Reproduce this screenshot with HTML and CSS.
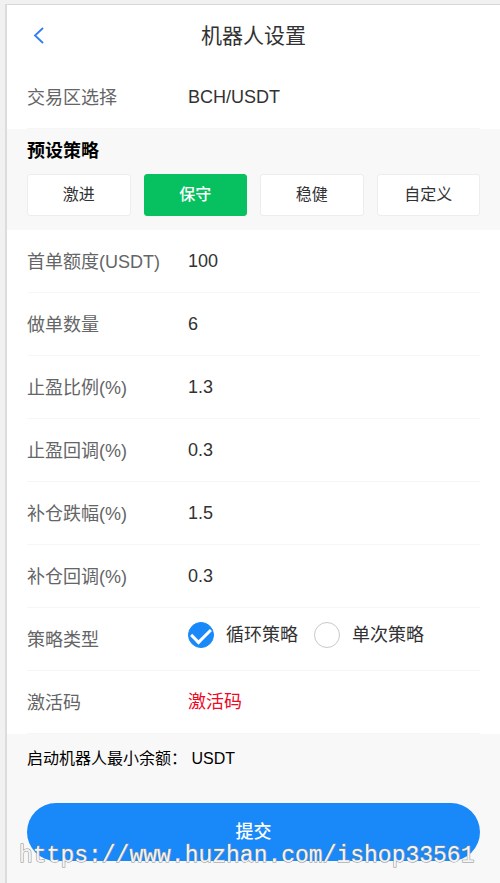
FILE: index.html
```
<!DOCTYPE html>
<html lang="zh-CN">
	<head>
		<meta charset="utf-8" />
		<meta name="viewport" content="width=device-width, initial-scale=1">
		<title>机器人设置</title>
		<link rel="stylesheet" href="styles.css">
	</head>
	<body>
		<form class="page">
			<header class="nav-bar">
				<button type="button" class="nav-back" aria-label="返回">
					<svg width="12" height="18" viewBox="0 0 12 18"><path d="M10 1L2 8.5l8 7.5" fill="none" stroke="#2f7df6" stroke-width="1.8"/></svg>
				</button>
				<h1>机器人设置</h1>
			</header>
			<div class="cell-group">
				<div class="cell">
					<label for="pair">交易区选择</label>
					<input type="text" id="pair" value="BCH/USDT">
				</div>
			</div>
			<section class="preset">
				<h2>预设策略</h2>
				<div class="preset-list">
					<button type="button">激进</button>
					<button type="button" class="active">保守</button>
					<button type="button">稳健</button>
					<button type="button">自定义</button>
				</div>
			</section>
			<div class="cell-group">
				<div class="cell">
					<label for="first">首单额度(USDT)</label>
					<input type="text" id="first" value="100">
				</div>
				<div class="cell">
					<label for="count">做单数量</label>
					<input type="text" id="count" value="6">
				</div>
				<div class="cell">
					<label for="profit">止盈比例(%)</label>
					<input type="text" id="profit" value="1.3">
				</div>
				<div class="cell">
					<label for="profit-back">止盈回调(%)</label>
					<input type="text" id="profit-back" value="0.3">
				</div>
				<div class="cell">
					<label for="cover">补仓跌幅(%)</label>
					<input type="text" id="cover" value="1.5">
				</div>
				<div class="cell">
					<label for="cover-back">补仓回调(%)</label>
					<input type="text" id="cover-back" value="0.3">
				</div>
				<div class="cell">
					<span class="cell-title" id="type-title">策略类型</span>
					<div class="radio-group" role="radiogroup" aria-labelledby="type-title">
						<label class="radio"><input type="radio" name="type" checked>循环策略</label>
						<label class="radio"><input type="radio" name="type">单次策略</label>
					</div>
				</div>
				<div class="cell">
					<label for="code">激活码</label>
					<input type="text" id="code" placeholder="激活码">
				</div>
			</div>
			<footer class="bottom">
				<p>启动机器人最小余额： USDT</p>
				<button type="submit" class="submit">提交</button>
				<div class="watermark">https://www.huzhan.com/ishop33561</div>
			</footer>
		</form>
	</body>
</html>
```
FILE: styles.css
```
* {
	box-sizing: border-box;
}
body {
	margin: 0;
	padding: 4px 0 0 5px;
	min-height: 100vh;
	display: flex;
	background-color: #f1f1f1;
	font-family: "Liberation Sans", "Noto Sans CJK SC", sans-serif;
	font-size: 18px;
	color: #323233;
}
button, input {
	font-family: inherit;
	font-size: inherit;
	color: inherit;
}
h1, h2, p {
	margin: 0;
}
.page {
	flex: 1;
	min-width: 0;
	border-left: 2px solid #dcdcdc;
	border-top: 1px solid #d8d8d8;
	background-color: #f8f8f8;
}
.nav-bar {
	display: grid;
	grid-template-columns: 40px 1fr 40px;
	align-items: center;
	height: 61px;
	padding: 0 20px;
	background-color: #fff;
}
.nav-bar h1 {
	padding-bottom: 4px;
	font-size: 21px;
	font-weight: normal;
	text-align: center;
}
.nav-back {
	display: flex;
	padding: 6px;
	border: none;
	background: none;
}
.cell-group {
	padding: 0 20px;
	background-color: #fff;
}
.cell {
	display: grid;
	grid-template-columns: 161px 1fr;
	align-items: center;
	height: 63px;
	border-bottom: 1px solid #f6f6f7;
}
.cell > label, .cell-title {
	padding-bottom: 3px;
	color: #646566;
	white-space: nowrap;
}
.cell input[type="text"] {
	width: 100%;
	height: 30px;
	padding: 0;
	border: none;
	outline: none;
	background: none;
}
.cell input::placeholder {
	color: #ee0a24;
	opacity: 1;
}
.radio-group {
	display: flex;
	gap: 16px;
	padding-bottom: 9px;
}
.radio {
	display: flex;
	align-items: center;
	gap: 12px;
	line-height: 24px;
}
.radio input {
	appearance: none;
	display: flex;
	justify-content: center;
	width: 26px;
	height: 26px;
	margin: 0;
	border: 1px solid #c8c9cc;
	border-radius: 50%;
}
.radio input:checked {
	border-color: #1989fa;
	background-color: #1989fa;
}
.radio input:checked::after {
	content: "";
	width: 9px;
	height: 16px;
	margin-top: 1px;
	border: solid #fff;
	border-width: 0 3px 3px 0;
	transform: rotate(45deg);
}
.preset {
	padding: 8px 20px 14px;
}
.preset h2 {
	margin-bottom: 8px;
	font-size: 18px;
	line-height: 29px;
	color: #000;
}
.preset-list {
	display: grid;
	grid-template-columns: repeat(4, 1fr);
	gap: 13px;
}
.preset-list button {
	height: 42px;
	padding: 0 0 4px;
	border: 1px solid #ebedf0;
	border-radius: 3px;
	background-color: #fff;
	font-size: 16px;
}
.preset-list .active {
	border-color: #07c160;
	background-color: #07c160;
	color: #fff;
	font-weight: 500;
}
.bottom {
	position: relative;
	padding: 12px 20px 20px;
}
.bottom p {
	margin-bottom: 31px;
	font-size: 16px;
	line-height: 26px;
	color: #000;
}
.submit {
	width: 100%;
	height: 58px;
	padding: 0 0 4px;
	border: none;
	border-radius: 29px;
	background-color: #1989fa;
	color: #fff;
	font-weight: 500;
}
.watermark {
	position: absolute;
	top: 107px;
	left: 12px;
	font-family: "Liberation Mono", monospace;
	font-size: 23px;
	line-height: 30px;
	color: #f4f4f4;
	-webkit-text-stroke: 1px #8c8c8c;
	paint-order: stroke;
	pointer-events: none;
}
```
